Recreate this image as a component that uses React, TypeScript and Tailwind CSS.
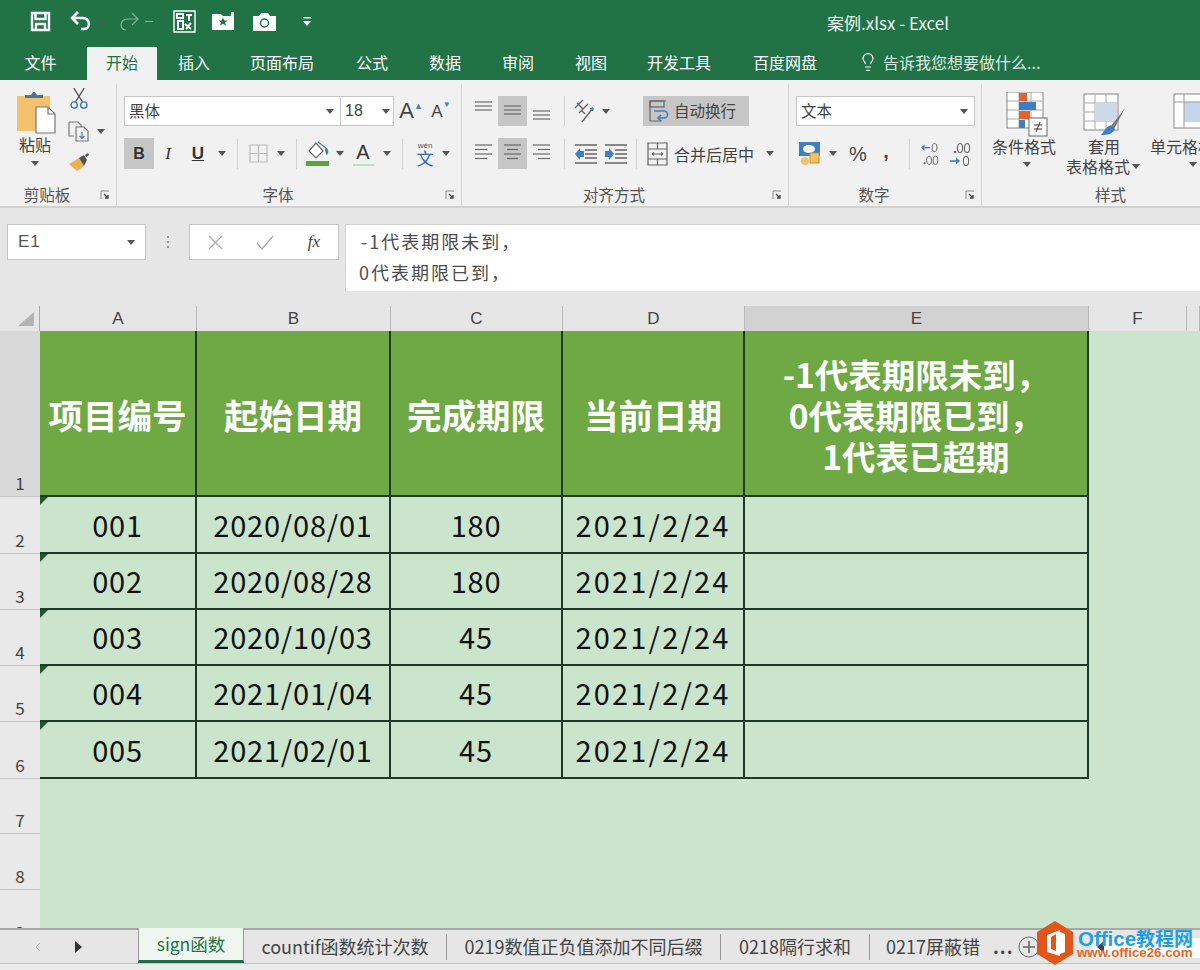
import React from "react";
import { Lightbulb } from "lucide-react";

const Caret = ({ w = 14 }: { w?: number }) => (
  <span className="flex items-center justify-center shrink-0" style={{ width: w }}>
    <svg width="8" height="5" viewBox="0 0 8 5"><path d="M0 0h8L4 5z" fill="#555" /></svg>
  </span>
);

const Sep = ({ w = 14, h = 30 }: { w?: number; h?: number }) => (
  <span className="flex items-center justify-center shrink-0" style={{ width: w }}>
    <span className="w-px bg-[#d4d4d4]" style={{ height: h }} />
  </span>
);

const Slot = ({ w, gray, children }: { w: number; gray?: boolean; children?: React.ReactNode }) => (
  <span
    className={`flex items-center justify-center shrink-0 h-full ${gray ? "bg-[#c6c6c6]" : ""}`}
    style={{ width: w }}
  >
    {children}
  </span>
);

const Launcher = () => (
  <span className="w-[22px] shrink-0 flex items-center justify-center">
    <svg width="10" height="10" viewBox="0 0 10 10">
      <path d="M9 1H1v8" fill="none" stroke="#888" strokeWidth="1" />
      <path d="M4 4l4 4M8 5v3H5" fill="none" stroke="#444" strokeWidth="1.3" />
    </svg>
  </span>
);

const Group = ({
  w,
  label,
  launcher = true,
  children,
}: {
  w: number;
  label: string;
  launcher?: boolean;
  children: React.ReactNode;
}) => (
  <div className="shrink-0 flex flex-col border-r border-[#d6d6d6] h-[124px] mt-[4px]" style={{ width: w }}>
    <div className="flex-1 min-h-0">{children}</div>
    <div className="h-[24px] mb-[1px] flex items-center text-[15.5px] text-[#555]">
      <span className="flex-1 text-center">{label}</span>
      {launcher && <Launcher />}
    </div>
  </div>
);

const Lines = ({ kind }: { kind: "top" | "mid" | "bot" | "l" | "c" | "r" }) => {
  const rows: [number, number][] =
    kind === "l"
      ? [[1, 17], [1, 12], [1, 17], [1, 12]]
      : kind === "c"
      ? [[1, 17], [4, 14], [1, 17], [4, 14]]
      : kind === "r"
      ? [[1, 17], [6, 17], [1, 17], [6, 17]]
      : [[1, 17], [1, 17], [1, 17]];
  const y0 = kind === "top" ? 2 : kind === "mid" ? 6 : kind === "bot" ? 11 : 2;
  const step = rows.length === 4 ? 4.5 : 4;
  return (
    <svg width="20" height="22" viewBox="0 0 20 22">
      {rows.map(([a, b], i) => (
        <path key={i} d={`M${a} ${y0 + i * step}H${b + 1}`} stroke="#6a6a6a" strokeWidth="1.2" />
      ))}
    </svg>
  );
};

const Indent = ({ flip }: { flip?: boolean }) => (
  <svg width="24" height="22" viewBox="0 0 24 22">
    <path d="M1 2h22M11 7h12M11 11h12M11 15h12M1 20h22" stroke="#666" strokeWidth="1.3" />
    <path d={flip ? "M1 8v6h4v3l5-6-5-6v3z" : "M10 8v6H6v3L1 11l5-6v3z"} fill="#3d7fc4" />
  </svg>
);

const Decimal = ({ more }: { more?: boolean }) => (
  <svg width="22" height="26" viewBox="0 0 22 26" fill="none" stroke="#666" strokeWidth="1.1">
    {more ? (
      <>
        <circle cx="6" cy="11" r="0.8" fill="#666" />
        <ellipse cx="11" cy="7" rx="2.6" ry="4.5" />
        <ellipse cx="18" cy="7" rx="2.6" ry="4.5" />
        <path d="M1 20h6" stroke="#3d7fc4" strokeWidth="1.6" />
        <path d="M7 16.5v7l4-3.5z" fill="#3d7fc4" stroke="none" />
        <ellipse cx="17" cy="20" rx="2.6" ry="4.5" />
      </>
    ) : (
      <>
        <path d="M5 6h6" stroke="#3d7fc4" strokeWidth="1.6" />
        <path d="M5 2.5v7L1 6z" fill="#3d7fc4" stroke="none" />
        <ellipse cx="16" cy="6" rx="2.6" ry="4.5" />
        <circle cx="5" cy="23" r="0.8" fill="#666" />
        <ellipse cx="10" cy="20" rx="2.6" ry="4.5" />
        <ellipse cx="17" cy="20" rx="2.6" ry="4.5" />
      </>
    )}
  </svg>
);

const Box = ({ className, children }: { className: string; children: React.ReactNode }) => (
  <div className={`bg-white border border-[#c6c6c6] flex items-center ${className}`}>{children}</div>
);

const cols = ["A", "B", "C", "D", "E", "F", ""];
const heads = ["项目编号", "起始日期", "完成期限", "当前日期"];
const rows = [
  ["001", "2020/08/01", "180", "2021/2/24"],
  ["002", "2020/08/28", "180", "2021/2/24"],
  ["003", "2020/10/03", "45", "2021/2/24"],
  ["004", "2021/01/04", "45", "2021/2/24"],
  ["005", "2021/02/01", "45", "2021/2/24"],
];
const line = "border-r-2 border-b-2 border-[#1d3a26]";
const RowNo = ({ n, dark }: { n: number; dark?: boolean }) => (
  <div
    className={`flex items-end justify-center pb-[1px] text-[17px] text-[#444] border-b border-[#c4c4c4] ${
      dark ? "bg-[#d9d9d9]" : "bg-[#e9e9e9]"
    }`}
  >
    {n}
  </div>
);

export default function App() {
  return (
    <div className="w-[1200px] h-[970px] overflow-hidden relative bg-[#e6e6e6] font-['Noto_Sans_CJK_SC','Liberation_Sans',sans-serif]">
      {/* Title + QAT */}
      <div className="h-[80px] bg-[#217346] text-white">
        <div className="h-[42px] flex items-center pl-[28px]">
          <Slot w={24}>
            <svg width="21" height="21" viewBox="0 0 21 21" fill="none" stroke="#fff" strokeWidth="2.4">
              <path d="M2 2h17v17H2zM5.5 3v5h10V3M6 19v-6h9v6" />
            </svg>
          </Slot>
          <span className="w-[15px]" />
          <Slot w={28}>
            <svg width="24" height="22" viewBox="0 0 24 22" fill="none" stroke="#fff" strokeWidth="2.6">
              <path d="M9 2L3 8l6 6M3 8h11a6 6 0 0 1 6 6 5 5 0 0 1-5 5h-3" />
            </svg>
          </Slot>
          <Caret w={12} />
          <span className="w-[10px]" />
          <Slot w={24}>
            <svg width="24" height="22" viewBox="0 0 24 22" fill="none" stroke="#7fb197" strokeWidth="1.2">
              <path d="M15 3l6 6-6 6M21 9H10a6 6 0 0 0-6 6 5 5 0 0 0 5 5" />
            </svg>
          </Slot>
          <span className="w-[8px] h-px bg-[#7fb197] ml-[4px]" />
          <span className="w-[19px]" />
          <Slot w={24}>
            <svg width="23" height="23" viewBox="0 0 23 23" fill="none" stroke="#fff">
              <path d="M1 1h21v21H1z" strokeWidth="1.4" />
              <path d="M4 4h6v4H4zM13 5h6M16 5v6M5 11h5v8H5zM12 14l6 5M18 13l-5 6" strokeWidth="2" />
            </svg>
          </Slot>
          <span className="w-[15px]" />
          <Slot w={24}>
            <svg width="22" height="20" viewBox="0 0 22 20">
              <path d="M0 3h9l2 2h8V1l3 0v18H0z" fill="#fff" />
              <path d="M11 6.5l1.3 3h3.2l-2.5 2 1 3.2-3-1.9-3 1.9 1-3.2-2.5-2h3.2z" fill="#217346" />
            </svg>
          </Slot>
          <span className="w-[17px]" />
          <Slot w={24}>
            <svg width="23" height="19" viewBox="0 0 23 19">
              <path d="M0 4h6l2-3h7l2 3h6v15H0z" fill="#fff" />
              <circle cx="11.5" cy="11" r="4" fill="none" stroke="#217346" strokeWidth="1.5" />
            </svg>
          </Slot>
          <span className="w-[27px]" />
          <Slot w={8}>
            <svg width="8" height="9" viewBox="0 0 8 9">
              <path d="M0 0h8v1.4H0zM0 4h8L4 9z" fill="#fff" />
            </svg>
          </Slot>
          <span className="w-[516px] shrink-0" />
          <span className="text-[17px] mt-[3px] text-[#f0f6f2] whitespace-nowrap">案例.xlsx - Excel</span>
        </div>
        <div className="h-[38px] flex items-end pl-[24px] text-[16px] relative">
          <span className="h-[33px] pb-[3px] flex items-center w-[33px] justify-center">文件</span>
          <span className="w-[30px]" />
          <span className="h-[33px] pb-[3px] w-[70px] bg-[#f1f1f1] text-[#217346] flex items-center justify-center">开始</span>
          <span className="w-[21px]" />
          {[
            ["插入", 72],
            ["页面布局", 106],
            ["公式", 73],
            ["数据", 73],
            ["审阅", 73],
            ["视图", 72],
            ["开发工具", 106],
          ].map(([t, w]) => (
            <span key={t} className="h-[33px] pb-[3px] flex items-center shrink-0" style={{ width: w as number }}>
              {t}
            </span>
          ))}
          <span className="h-[33px] pb-[3px] flex items-center shrink-0 w-[105px]">百度网盘</span>
          <span className="h-[33px] pb-[3px] flex items-center gap-[5px] text-[#dcebe3] text-[16px] whitespace-nowrap">
            <Lightbulb size={20} strokeWidth={1.4} color="#fff" />
            告诉我您想要做什么...
          </span>
        </div>
      </div>

      {/* Ribbon */}
      <div className="h-[128px] bg-[#f1f1f1] border-b-2 border-[#d2d2d2] flex overflow-hidden text-[#444]">
        <Group w={117} label="剪贴板">
          <div className="flex h-full">
            <div className="w-[68px] shrink-0 flex flex-col items-center pt-[8px] pl-[2px]">
              <svg width="40" height="42" viewBox="0 0 40 42" className="ml-[4px]">
                <rect x="0" y="4" width="33" height="35" fill="#f4c26d" />
                <path d="M8 6V3h6l2-3h2l2 3h6v3z" fill="#4d7396" />
                <path d="M19 15h12l7 7v19H19z" fill="#fff" stroke="#777" strokeWidth="1.2" />
                <path d="M31 15v7h7" fill="none" stroke="#777" strokeWidth="1.2" />
              </svg>
              <span className="text-[16px] leading-[22px] -mt-[1px]">粘贴</span>
              <span className="mt-[6px]"><Caret w={12} /></span>
            </div>
            <div className="flex flex-col items-start pt-[4px]">
              <span className="w-[22px] flex justify-center">
                <svg width="20" height="21" viewBox="0 0 20 24" fill="none">
                  <path d="M4 0l10 16M16 0L6 16" stroke="#555" strokeWidth="1.6" />
                  <circle cx="4.5" cy="19.5" r="3.6" stroke="#3f77b5" strokeWidth="1.6" />
                  <circle cx="15.5" cy="19.5" r="3.6" stroke="#3f77b5" strokeWidth="1.6" />
                </svg>
              </span>
              <span className="flex items-center mt-[12px]">
                <span className="w-[22px] flex justify-center">
                  <svg width="22" height="21" viewBox="0 0 22 21" fill="none" stroke="#777" strokeWidth="1.2">
                    <path d="M1 1h9l3 3v2M1 1v14h5" />
                    <path d="M8 6h8l4 4v10H8z" fill="#f1f1f1" />
                    <path d="M14 11v6M11.5 15l2.5 2.5 2.5-2.5" stroke="#3f77b5" />
                  </svg>
                </span>
                <span className="ml-[6px]"><Caret w={10} /></span>
              </span>
              <span className="w-[22px] flex justify-center mt-[10px]">
                <svg width="22" height="20" viewBox="0 0 22 20">
                  <path d="M1 12l10-6 5 8-7 5z" fill="#efb14f" />
                  <path d="M11 6l5-3 3 5-3 6z" fill="#555" />
                  <path d="M17 3l3-2 1 2-3 2z" fill="#555" />
                </svg>
              </span>
            </div>
          </div>
        </Group>

        <Group w={345} label="字体">
          <div className="pl-[7px] pt-[12px]">
            <div className="flex items-center h-[30px]">
              <Box className="w-[216px] h-full pl-[4px] pr-[6px] justify-between text-[15.5px] border-r-0">
                黑体
                <Caret w={8} />
              </Box>
              <Box className="w-[54px] h-full pl-[4px] justify-between text-[16px] font-['Liberation_Sans']">
                18
                <Caret w={14} />
              </Box>
              <span className="w-[30px] ml-[2px] flex justify-center items-center h-full text-[22px] leading-none font-['Liberation_Sans'] relative">
                A<span className="text-[#3d7fc4] text-[9px] self-start mt-[6px]">▲</span>
              </span>
              <span className="w-[30px] flex justify-center items-center h-full text-[17px] leading-none font-['Liberation_Sans']">
                A<span className="text-[#3d7fc4] text-[8px] self-start mt-[5px]">▼</span>
              </span>
            </div>
            <div className="flex items-center h-[31px] mt-[12px] font-['Liberation_Sans'] text-[#333]">
              <Slot w={30} gray><b className="text-[16px]">B</b></Slot>
              <Slot w={28}><i className="text-[17px] font-['Liberation_Serif']">I</i></Slot>
              <Slot w={32}><u className="text-[17px] font-bold">U</u></Slot>
              <Caret w={16} />
              <Sep w={14} />
              <Slot w={28}>
                <svg width="19" height="19" viewBox="0 0 19 19" fill="none" stroke="#bbb" strokeWidth="1.2">
                  <path d="M1 1h17v17H1zM9.5 1v17M1 9.5h17" />
                </svg>
              </Slot>
              <Caret w={18} />
              <Sep w={12} />
              <Slot w={32}>
                <svg width="24" height="28" viewBox="0 0 24 28">
                  <path d="M10 3L3 11l7 7 7-7z" fill="#fff" stroke="#666" strokeWidth="1.2" />
                  <path d="M12 2l8 6M20 8c2 2 2 4 1 6-1-2-2-4-1-6" fill="#3d7fc4" stroke="#3d7fc4" strokeWidth="1.2" />
                  <rect x="0" y="21" width="23" height="5" fill="#58a53c" />
                </svg>
              </Slot>
              <Caret w={12} />
              <Slot w={34}>
                <span className="flex flex-col items-center text-[20px] leading-[20px]">
                  A
                  <span className="w-[21px] h-[2px] bg-[#bfe0bf] mt-[2px]" />
                </span>
              </Slot>
              <Caret w={14} />
              <Sep w={16} />
              <Slot w={30}>
                <span className="flex flex-col items-center leading-none">
                  <span className="text-[8px] text-[#555]">wén</span>
                  <span className="text-[17px] text-[#3069ad] font-['Noto_Sans_CJK_SC'] -mt-[1px]">文</span>
                </span>
              </Slot>
              <Caret w={12} />
            </div>
          </div>
        </Group>

        <Group w={327} label="对齐方式">
          <div className="pl-[8px] pt-[12px]">
            <div className="flex items-center h-[30px]">
              <Slot w={28}><Lines kind="top" /></Slot>
              <Slot w={29} gray><Lines kind="mid" /></Slot>
              <Slot w={30}><Lines kind="bot" /></Slot>
              <Sep w={14} />
              <Slot w={28}>
                <svg width="24" height="26" viewBox="0 0 24 26" fill="none" stroke="#666" strokeWidth="1.4">
                  <path d="M2 10l8-8M6 15l9-9M4 5l6 6M8 12l4 4M20 10L9 24" />
                  <path d="M20 10l-3 1M20 10l-.5 3" stroke="#3d7fc4" strokeWidth="1.6" />
                </svg>
              </Slot>
              <Caret w={14} />
              <span className="w-[30px]" />
              <span className="w-[106px] h-full bg-[#c6c6c6] flex items-center pl-[5px] gap-[4px] text-[15.5px] whitespace-nowrap">
                <svg width="22" height="24" viewBox="0 0 22 24" fill="none" stroke="#666" strokeWidth="1.2">
                  <path d="M2 2h16M2 22h12M2 2v20" />
                  <rect x="2" y="2" width="14" height="6" />
                  <path d="M6 12h10a2 2 0 0 1 0 7h-5" stroke="#3d7fc4" strokeWidth="1.6" />
                  <path d="M13 16l-3 3 3 3" stroke="#3d7fc4" strokeWidth="1.6" />
                </svg>
                自动换行
              </span>
            </div>
            <div className="flex items-center h-[31px] mt-[12px]">
              <Slot w={28}><Lines kind="l" /></Slot>
              <Slot w={29} gray><Lines kind="c" /></Slot>
              <Slot w={30}><Lines kind="r" /></Slot>
              <Sep w={14} />
              <Slot w={30}><Indent /></Slot>
              <Slot w={30}><Indent flip /></Slot>
              <Sep w={10} />
              <Slot w={32}>
                <svg width="21" height="24" viewBox="0 0 21 24" fill="none" stroke="#666" strokeWidth="1.2">
                  <path d="M1 1h19v22H1zM1 7h19M1 17h19M10.5 1v6M10.5 17v6" />
                  <path d="M5 12h11M5 12l2-1.5M5 12l2 1.5M16 12l-2-1.5M16 12l-2 1.5" />
                </svg>
              </Slot>
              <span className="w-[90px] shrink-0 pl-[1px] text-[16px] whitespace-nowrap">合并后居中</span>
              <Caret w={14} />
            </div>
          </div>
        </Group>

        <Group w={193} label="数字">
          <div className="pl-[7px] pt-[12px]">
            <Box className="w-[179px] h-[30px] pl-[4px] pr-[6px] justify-between text-[15.5px]">
              文本
              <Caret w={8} />
            </Box>
            <div className="flex items-center h-[31px] mt-[12px] font-['Liberation_Sans']">
              <Slot w={28}>
                <svg width="24" height="26" viewBox="0 0 24 26">
                  <rect x="1" y="1" width="21" height="14" fill="#3d7fc4" />
                  <ellipse cx="11" cy="8" rx="6" ry="4" fill="#fff" />
                  <circle cx="7" cy="20" r="4" fill="#f4c26d" />
                  <rect x="12" y="12" width="9" height="10" fill="#f4c26d" stroke="#c98f2c" />
                </svg>
              </Slot>
              <Caret w={18} />
              <Slot w={32}><span className="text-[20px]">%</span></Slot>
              <Slot w={24}><b className="text-[20px] -mt-[6px]">,</b></Slot>
              <Sep w={22} />
              <Slot w={20}><Decimal /></Slot>
              <Slot w={40}><Decimal more /></Slot>
            </div>
          </div>
        </Group>

        <Group w={258} label="样式" launcher={false}>
          <div className="flex pl-[8px] text-[16px] leading-[20px] pt-[8px]">
            <div className="w-[68px] shrink-0 flex flex-col items-center">
              <svg width="44" height="46" viewBox="0 0 44 46" className="ml-[3px]">
                <rect x="3" y="0" width="36" height="36" fill="#fff" stroke="#888" />
                <path d="M15 0v36M27 0v36M3 9h36M3 18h36M3 27h36" stroke="#aaa" />
                <rect x="15" y="1" width="8" height="8" fill="#e8602c" />
                <rect x="15" y="10" width="17" height="8" fill="#3d7fc4" />
                <rect x="15" y="19" width="11" height="8" fill="#e8602c" />
                <rect x="15" y="28" width="6" height="8" fill="#3d7fc4" />
                <rect x="25" y="26" width="18" height="18" fill="#fff" stroke="#666" />
                <path d="M30 33h8M30 37h8M36 30l-4 10" stroke="#333" fill="none" />
              </svg>
              <span className="whitespace-nowrap -mt-[2px]">条件格式</span>
              <span className="mt-[6px] ml-[6px]"><Caret w={10} /></span>
            </div>
            <span className="w-[6px] shrink-0" />
            <div className="w-[80px] shrink-0 flex flex-col items-center">
              <svg width="46" height="46" viewBox="0 0 46 46">
                <rect x="3" y="2" width="34" height="36" fill="#fff" stroke="#888" />
                <path d="M14 2v36M25 2v36M3 11h34M3 20h34M3 29h34" stroke="#aaa" />
                <rect x="14" y="11" width="22" height="18" fill="#cdd9e8" />
                <path d="M44 16L30 34l3 3z" fill="#777" />
                <path d="M30 33l4 4c-2 5-8 6-14 6 3-3 4-8 10-10z" fill="#3d7fc4" />
              </svg>
              <span className="whitespace-nowrap -mt-[2px]">套用</span>
              <span className="whitespace-nowrap flex items-center">表格格式<Caret w={12} /></span>
            </div>
            <span className="w-[6px] shrink-0" />
            <div className="w-[80px] shrink-0 flex flex-col items-start">
              <svg width="46" height="46" viewBox="0 0 46 46" className="ml-[22px]">
                <rect x="2" y="2" width="44" height="34" fill="#fff" stroke="#888" />
                <rect x="12" y="10" width="34" height="20" fill="#c5d6ec" />
                <path d="M2 10h44M12 2v34" stroke="#999" />
                <path d="M30 40l12-12 4 4-8 10z" fill="#3d7fc4" />
              </svg>
              <span className="whitespace-nowrap -mt-[2px]">单元格样式</span>
              <span className="mt-[6px] ml-[38px]"><Caret w={10} /></span>
            </div>
          </div>
        </Group>
      </div>

      {/* Formula bar */}
      <div className="h-[98px] pt-[16px] flex items-start text-[#555]">
        <Box className="w-[139px] h-[36px] ml-[7px] pl-[10px] pr-[9px] justify-between text-[17px] font-['Liberation_Sans'] tracking-[1px]">
          E1
          <Caret w={10} />
        </Box>
        <span className="w-[43px] h-[36px] flex flex-col items-center justify-center gap-[3px]">
          <span className="w-[2px] h-[2px] bg-[#999]" />
          <span className="w-[2px] h-[2px] bg-[#999]" />
          <span className="w-[2px] h-[2px] bg-[#999]" />
        </span>
        <Box className="w-[150px] h-[36px]">
          <span className="w-[50px] flex justify-center">
            <svg width="15" height="15" viewBox="0 0 15 15"><path d="M1 1l13 13M14 1L1 14" stroke="#aaa" strokeWidth="1.2" /></svg>
          </span>
          <span className="w-[50px] flex justify-center">
            <svg width="18" height="15" viewBox="0 0 18 15" fill="none"><path d="M1 8l5 6L17 1" stroke="#aaa" strokeWidth="1.3" /></svg>
          </span>
          <span className="w-[48px] flex justify-center font-['Liberation_Serif'] italic text-[17px] text-[#444]">fx</span>
        </Box>
        <div className="flex-1 h-[67px] ml-[6px] bg-white border-l border-t border-[#d0d0d0] text-[18px] leading-[31px] tracking-[2px] text-[#4c4c4c]">
          <div className="pl-[15px] pt-[1px]">-1代表期限未到，</div>
          <div className="pl-[13px]">0代表期限已到，</div>
        </div>
      </div>

      {/* Sheet */}
      <div className="h-[622px] bg-[#cbe5cd] grid grid-cols-[40px_157px_194px_172px_182px_344px_98px_13px] grid-rows-[25px_166px_57px_56px_56px_56px_57px_55px_56px_56px] overflow-hidden">
        <div className="bg-[#e6e6e6] border-r border-[#aaa] flex items-end justify-end pr-[5px] pb-[5px]">
          <svg width="16" height="14" viewBox="0 0 16 14"><path d="M16 0v14H0z" fill="#b4b4b4" /></svg>
        </div>
        {cols.map((c) => (
          <div
            key={c || "x"}
            className={`flex items-center justify-center text-[17px] text-[#444] border-r border-[#b8b8b8] font-['Liberation_Sans'] ${
              c === "E" ? "bg-[#d2d2d2]" : "bg-[#e6e6e6]"
            }`}
          >
            {c}
          </div>
        ))}

        <RowNo n={1} dark />
        {heads.map((h) => (
          <div key={h} className={`bg-[#6ea943] ${line} flex items-center justify-center pt-[3px] text-white font-bold text-[34.5px] whitespace-nowrap`}>
            {h}
          </div>
        ))}
        <div className={`bg-[#6ea943] ${line} flex flex-col items-center justify-center text-white font-bold text-[33.5px] leading-[41px] whitespace-nowrap pt-[3px]`}>
          <div>-1代表期限未到，</div>
          <div>0代表期限已到，</div>
          <div>1代表已超期</div>
        </div>
        <div className="col-span-2" />

        {rows.map((r, i) => (
          <React.Fragment key={r[0]}>
            <RowNo n={i + 2} />
            {r.map((v, j) => (
              <div
                key={j}
                className={`${line} relative flex items-center justify-center text-[#111] whitespace-nowrap ${
                  j === 3 ? "text-[29px] tracking-[2.2px]" : "text-[29px] tracking-[0.8px]"
                }`}
              >
                {j === 0 && (
                  <svg width="8" height="8" viewBox="0 0 8 8" className="absolute left-0 top-0">
                    <path d="M0 0h8L0 8z" fill="#1d5a30" />
                  </svg>
                )}
                {v}
              </div>
            ))}
            <div className={line} />
            <div className="col-span-2" />
          </React.Fragment>
        ))}

        {[7, 8, 9].map((n) => (
          <React.Fragment key={n}>
            <RowNo n={n} />
            <div className="col-span-7" />
          </React.Fragment>
        ))}
      </div>

      {/* Tabs */}
      <div className="h-[35px] flex items-stretch bg-[#e6e6e6] border-t-2 border-[#a8a8a8] text-[18px] text-[#444] whitespace-nowrap">
        <div className="w-[138px] shrink-0 flex items-center relative">
          <span className="w-[34px]" />
          <svg width="8" height="12" viewBox="0 0 8 12" fill="none"><path d="M6 2L2 6l4 4" stroke="#b0b0b0" /></svg>
          <span className="w-[33px]" />
          <svg width="7" height="12" viewBox="0 0 7 12"><path d="M0 0l7 6-7 6z" fill="#333" /></svg>
        </div>
        <div className="w-[106px] shrink-0 -mt-[2px] bg-[#eff6f0] border-x border-[#999] border-b-[3px] border-b-[#1e6b42] text-[#217346] text-[17.5px] flex items-center justify-center">
          sign函数
        </div>
        <div className="w-[203px] shrink-0 flex items-center">
          <span className="flex-1 text-center">countif函数统计次数</span>
          <span className="w-px h-[26px] bg-[#999]" />
        </div>
        <div className="w-[274px] shrink-0 flex items-center">
          <span className="flex-1 text-center overflow-hidden">0219数值正负值添加不同后缀</span>
          <span className="w-px h-[26px] bg-[#999]" />
        </div>
        <div className="w-[149px] shrink-0 flex items-center">
          <span className="flex-1 text-center">0218隔行求和</span>
          <span className="w-px h-[26px] bg-[#999]" />
        </div>
        <div className="w-[117px] shrink-0 flex items-center overflow-hidden pl-[16px]">0217屏蔽错</div>
        <div className="w-[24px] shrink-0 flex items-center font-bold tracking-[1px] pl-[6px]">...</div>
        <div className="flex items-center pl-[7px]">
          <svg width="22" height="22" viewBox="0 0 22 22" fill="none" stroke="#666">
            <circle cx="11" cy="11" r="10" />
            <path d="M11 5v12M5 11h12" strokeWidth="1.6" />
          </svg>
        </div>
      </div>
      <div className="h-[7px] border-t border-[#c4c4c4] bg-[#ececec]" />

      {/* Watermark */}
      <div className="absolute left-[1092px] top-[938px] w-[108px] h-[20px] bg-white" />
      <svg width="8" height="12" viewBox="0 0 8 12" className="absolute left-[1097px] top-[941px]">
        <path d="M7 0v12L0 6z" fill="#444" />
      </svg>
      <svg width="36" height="44" viewBox="0 0 36 44" className="absolute left-[1037px] top-[921px]">
        <path d="M18 0l18 11v22L18 44 0 33V11z" fill="#e2561a" />
        <path d="M10 14l13-5v26l-13-4zM14 16v12l5 2V13z" fill="#fff" fillRule="evenodd" />
        <path d="M23 11l5 2v18l-5 2z" fill="#fff" />
      </svg>
      <div className="absolute left-[1078px] top-[925px] text-[20.5px] leading-[25px] font-bold text-[#1ea0e8] whitespace-nowrap font-['Liberation_Sans','Noto_Sans_CJK_SC',sans-serif]">
        Office<span className="font-['Noto_Sans_CJK_SC'] text-[19px]">教程网</span>
      </div>
      <div className="absolute left-[1077px] top-[943px] text-[13.3px] leading-[20px] font-bold text-[#e8641e] whitespace-nowrap font-['Liberation_Sans',sans-serif]">
        www.office26.com
      </div>
    </div>
  );
}
